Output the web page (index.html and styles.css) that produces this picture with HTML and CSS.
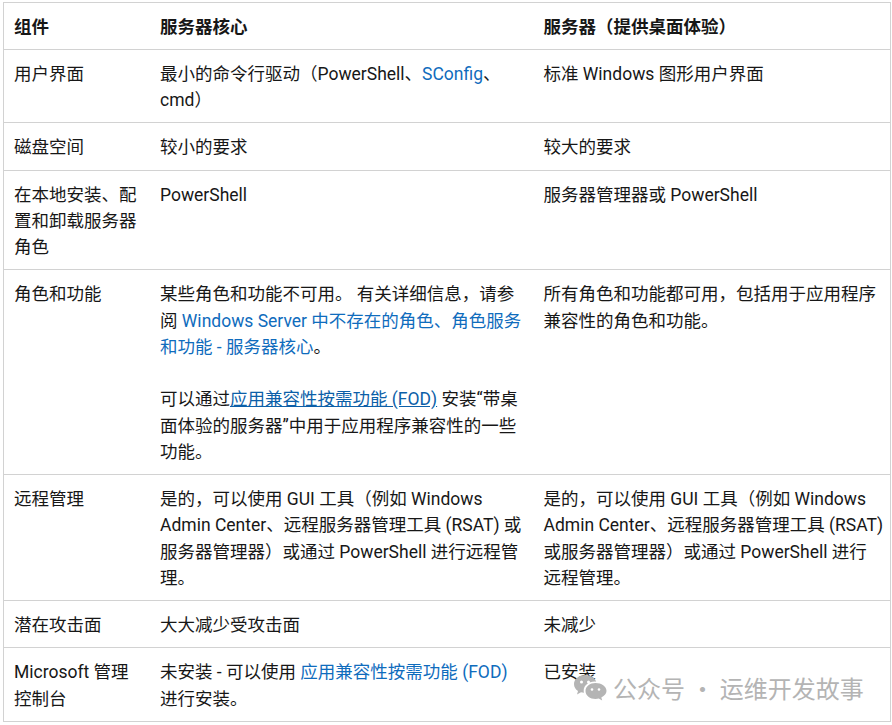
FILE: index.html
```html
<!DOCTYPE html>
<html lang="zh-CN">
<head>
<meta charset="utf-8">
<title>服务器核心</title>
<link rel="stylesheet" href="styles.css">
</head>
<body>
<table class="compare">
<colgroup><col class="c1"><col class="c2"><col class="c3"></colgroup>
<thead>
<tr><th>组件</th><th>服务器核心</th><th>服务器（提供桌面体验）</th></tr>
</thead>
<tbody>
<tr><td>用户界面</td><td>最小的命令行驱动（PowerShell、<a href="#">SConfig</a>、cmd）</td><td>标准 Windows 图形用户界面</td></tr>
<tr><td>磁盘空间</td><td>较小的要求</td><td>较大的要求</td></tr>
<tr><td>在本地安装、配置和卸载服务器角色</td><td>PowerShell</td><td>服务器管理器或 PowerShell</td></tr>
<tr><td>角色和功能</td><td>某些角色和功能不可用。 有关详细信息，请参阅 <a href="#">Windows Server 中不存在的角色、角色服务和功能 - 服务器核心</a>。<br><br>可以通过<a href="#" class="hover">应用兼容性按需功能 (FOD)</a> 安装“带桌面体验的服务器”中用于应用程序兼容性的一些功能。</td><td>所有角色和功能都可用，包括用于应用程序兼容性的角色和功能。</td></tr>
<tr><td>远程管理</td><td>是的，可以使用 GUI 工具（例如 Windows Admin Center、远程服务器管理工具 (RSAT) 或服务器管理器）或通过 PowerShell 进行远程管理。</td><td>是的，可以使用 GUI 工具（例如 Windows Admin Center、远程服务器管理工具 (RSAT) 或服务器管理器）或通过 PowerShell 进行<br>远程管理。</td></tr>
<tr><td>潜在攻击面</td><td>大大减少受攻击面</td><td>未减少</td></tr>
<tr><td>Microsoft 管理控制台</td><td>未安装 - 可以使用 <a href="#">应用兼容性按需功能 (FOD)</a> 进行安装。</td><td>已安装</td></tr>
</tbody>
</table>
<div class="mark">
<svg class="mark-icon" width="33" height="26" viewBox="0 0 33 26" aria-hidden="true">
<path fill="#b4b4b4" d="M11 0C5 0 0 4 0 9c0 3 1.600 5.400 4 7l-1 3.500 4-2.200c1 .3 2 .5 3 .5-.2-.8-.3-1.500-.3-2.300C9.700 10.500 14.500 6.500 20.500 6.500c.7 0 1.300 0 1.700.2C21 2.800 16.500 0 11 0z"/>
<path fill="#b4b4b4" d="M21.500 8C16 8 11.500 11.500 11.500 16s4.500 8 10 8c1.200 0 2.200-.2 3.300-.5l3.400 2-.9-3.100C30.700 20.800 32.500 18.500 32.500 16c0-4.500-5-8-11-8z"/>
<circle cx="7.500" cy="7" r="1.500" fill="#fff"/><circle cx="14.500" cy="7" r="1.500" fill="#fff"/>
<circle cx="18" cy="14.500" r="1.300" fill="#fff"/><circle cx="25" cy="14.500" r="1.300" fill="#fff"/>
</svg>
<span>公众号 · 运维开发故事</span>
</div>
</body>
</html>
```
FILE: styles.css
```css
html, body { margin: 0; padding: 0; background: #fff; }
body { position: relative; width: 892px; height: 725px; overflow: hidden; padding: 1.6px 0 0 3px; box-sizing: border-box; }
.compare {
  border-collapse: collapse;
  table-layout: fixed;
  width: 887px;
  font-family: Roboto, "Noto Sans CJK SC", sans-serif;
  font-size: 17.5px;
  line-height: 26.25px;
  color: #171717;
}
.c1 { width: 146.5px; }
.c2 { width: 383.5px; }
.c3 { width: 357px; }
.compare th, .compare td {
  border: 1px solid #d2d2d2;
  border-left: 0;
  border-right: 0;
  padding: 11px 10px 9px;
  text-align: left;
  vertical-align: top;
}
.compare th { font-weight: 700; }
.compare tr > :first-child { border-left: 1px solid #d2d2d2; }
.compare tr > :last-child { border-right: 1px solid #d2d2d2; padding-right: 5px; }
.compare a { color: #0f6cbd; text-decoration: none; }
.compare a.hover { color: #0c5fa8; text-decoration: underline; }
.mark {
  position: absolute;
  left: 574px;
  top: 674px;
  display: flex;
  align-items: center;
  gap: 6px;
  color: #b4b4b4;
  font-family: "Noto Sans CJK SC", sans-serif;
  font-size: 24px;
  line-height: 28px;
  white-space: nowrap;
}
```
